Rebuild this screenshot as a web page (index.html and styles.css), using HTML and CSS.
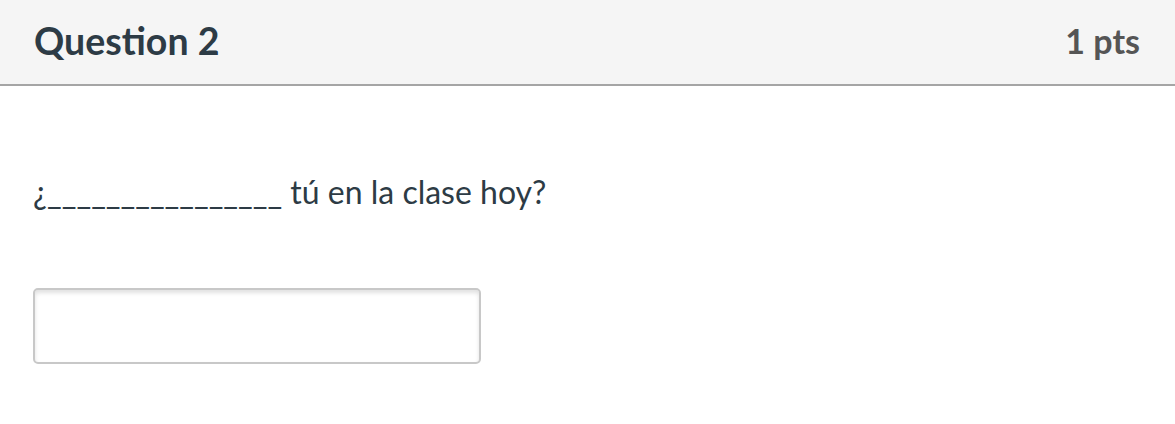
FILE: index.html
```html
<!DOCTYPE html>
<html>
<head>
<meta charset="utf-8">
<link rel="stylesheet" href="styles.css">
</head>
<body>
<div class="question">
  <div class="header">
    <h2 class="title">Question 2</h2>
    <div class="pts">1 pts</div>
  </div>
  <div class="body">
    <p class="text">¿________________ tú en la clase hoy?</p>
    <input class="answer" type="text">
  </div>
</div>
</body>
</html>
```
FILE: styles.css
```css
html, body { margin: 0; padding: 0; background: #fff; }
body { font-family: Lato, "Open Sans", sans-serif; color: #2d3b45; }
.header {
  display: flex;
  justify-content: space-between;
  align-items: center;
  padding: 0 35px 4px 34px;
  background: #f5f5f5;
  border-bottom: 2px solid #a5a5a5;
  box-sizing: border-box;
  height: 86px;
}
.title { margin: 0; font-size: 37.5px; font-weight: 700; color: #2d3b45; }
.pts { font-size: 34px; font-weight: 700; color: #555; }
.body { padding: 88px 34px 0 33px; }
.text { margin: 0; font-size: 32px; line-height: 36px; }
.answer {
  display: block;
  margin-top: 78px;
  width: 448px;
  height: 76px;
  box-sizing: border-box;
  border: 2px solid #c8c8c8;
  border-radius: 5px;
  box-shadow: inset 0 3px 4px rgba(0,0,0,0.12);
  background: #fff;
}
```
